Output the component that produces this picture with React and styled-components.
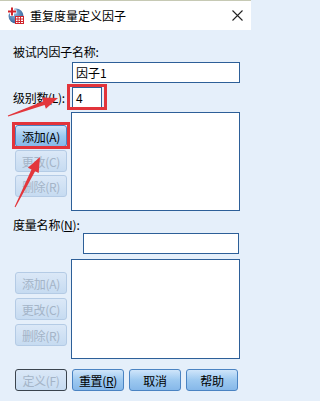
import React from 'react';
import styled, { createGlobalStyle } from 'styled-components';

const Global = createGlobalStyle`
  html, body { margin: 0; padding: 0; background: #e5effa; }
  body { font-family: "Noto Sans CJK SC", "Noto Sans", sans-serif; }
`;

const Window = styled.div`
  position: relative;
  width: 251px;
  height: 401px;
  background: #e5effa;
  display: flex;
  flex-direction: column;
  overflow: hidden;
  font-size: 12px;
  color: #000;
`;

const TitleBar = styled.div`
  height: 30px;
  flex: none;
  box-sizing: border-box;
  background: #fff;
  border-top: 1px solid #c6c9b4;
  display: flex;
  align-items: center;
  padding: 0 8px 0 7px;
  gap: 6px;
`;

const Title = styled.span`
  flex: 1;
  font-size: 12px;
  line-height: 16px;
  color: #000;
`;

const Body = styled.div`
  display: flex;
  flex-direction: column;
  padding: 0 11px 0 13px;
`;

const Label = styled.div`
  line-height: 16px;
  height: 16px;
  margin-top: ${p => p.$mt || 0}px;
  white-space: nowrap;
  letter-spacing: -0.2px;
`;

const TextBox = styled.div`
  box-sizing: border-box;
  height: 21px;
  width: ${p => p.$w}px;
  margin-top: ${p => p.$mt || 0}px;
  margin-left: ${p => p.$ml || 0}px;
  background: #fff;
  border: 1px solid #2d5f98;
  padding-left: 3px;
  line-height: 19px;
  font-size: 12px;
`;

const Row = styled.div`
  display: flex;
  align-items: center;
  margin-top: ${p => p.$mt || 0}px;
`;

const RowLabel = styled.div`
  width: 59px;
  line-height: 16px;
  white-space: nowrap;
  letter-spacing: -0.3px;
`;

const Highlight = styled.div`
  position: relative;
  &::after {
    content: '';
    position: absolute;
    left: -5px;
    right: -5px;
    top: -3px;
    bottom: -2px;
    border: 3px solid #e2343b;
    pointer-events: none;
  }
`;

const Section = styled.div`
  display: flex;
  margin-top: ${p => p.$mt || 0}px;
`;

const ButtonCol = styled.div`
  width: 52px;
  margin-left: 2px;
  margin-right: 4px;
  padding-top: 13px;
  display: flex;
  flex-direction: column;
  gap: ${p => p.$gap}px;
`;

const ListBox = styled.div`
  box-sizing: border-box;
  width: 170px;
  height: ${p => p.$h}px;
  background: #fff;
  border: 1px solid #2d5f98;
`;

const Btn = styled.div`
  position: relative;
  box-sizing: border-box;
  height: 22px;
  width: 52px;
  border-radius: 3px;
  display: flex;
  align-items: center;
  justify-content: center;
  font-size: 12px;
  white-space: nowrap;
  letter-spacing: -0.3px;
  ${p => p.$disabled ? `
    color: #a4b4c7;
    background: linear-gradient(#dbe8f7, #c6dbf1);
    border: 1px solid ${p.$focus ? '#3b444e' : '#b4cbe5'};
  ` : `
    color: #000;
    background: linear-gradient(#cfe5fa, #9dc9f0 50%, #86b8e9);
    border: 1px solid #4a83c2;
  `}
  ${p => p.$marked ? `
    &::after {
      content: '';
      position: absolute;
      left: -4px;
      right: -4px;
      top: -4px;
      bottom: -3px;
      border: 3px solid #e2343b;
      pointer-events: none;
    }
  ` : ''}
`;

const U = styled.span`
  text-decoration: underline;
  text-underline-offset: 1px;
`;

const BottomRow = styled.div`
  display: flex;
  gap: 5px;
  margin-top: 10px;
  margin-left: 2px;
`;

const Overlay = styled.svg`
  position: absolute;
  left: 0;
  top: 0;
  pointer-events: none;
`;

const AppIcon = () => (
  <svg width="17" height="17" viewBox="0 0 17 17">
    <defs>
      <radialGradient id="g" cx="0.4" cy="0.35" r="0.7">
        <stop offset="0" stopColor="#8fb8e0" />
        <stop offset="1" stopColor="#2f5f96" />
      </radialGradient>
    </defs>
    <circle cx="9" cy="9" r="7.5" fill="url(#g)" />
    <rect x="0.5" y="2.5" width="9" height="4" fill="#fff" />
    <rect x="3" y="0" width="4" height="9" fill="#fff" />
    <rect x="1" y="3.5" width="8" height="2" fill="#d0242c" />
    <rect x="4" y="0.5" width="2" height="8" fill="#d0242c" />
    <rect x="8.5" y="9.5" width="8" height="7" fill="#fff" stroke="#d0242c" strokeWidth="1" />
    <path d="M8.5 12h8M8.5 14.5h8M11 9.5v7M13.5 9.5v7" stroke="#d0242c" strokeWidth="1" />
  </svg>
);

const CloseIcon = () => (
  <svg width="11" height="11" viewBox="0 0 11 11">
    <path d="M0.5 0.5L10.5 10.5M10.5 0.5L0.5 10.5" stroke="#222" strokeWidth="1.1" />
  </svg>
);

export default function App() {
  return (
    <>
      <Global />
      <Window>
        <TitleBar>
          <AppIcon />
          <Title>重复度量定义因子</Title>
          <CloseIcon />
        </TitleBar>
        <Body>
          <Label $mt={14}>被试内因子名称:</Label>
          <TextBox $w={168} $ml={59} $mt={2}>因子1</TextBox>
          <Row $mt={4}>
            <RowLabel>级别数(L):</RowLabel>
            <Highlight>
              <TextBox $w={30}>4</TextBox>
            </Highlight>
          </Row>
          <Section $mt={4}>
            <ButtonCol $gap={3}>
              <Btn $marked>添加(A)</Btn>
              <Btn $disabled>更改(C)</Btn>
              <Btn $disabled>删除(R)</Btn>
            </ButtonCol>
            <ListBox $h={99} />
          </Section>
          <Label $mt={6}>度量名称(<U>N</U>):</Label>
          <TextBox $w={156} $ml={70} $mt={0}>{''}</TextBox>
          <Section $mt={5}>
            <ButtonCol $gap={4}>
              <Btn $disabled>添加(A)</Btn>
              <Btn $disabled>更改(C)</Btn>
              <Btn $disabled>删除(R)</Btn>
            </ButtonCol>
            <ListBox $h={100} />
          </Section>
          <BottomRow>
            <Btn $disabled $focus>定义(F)</Btn>
            <Btn>重置(<U>R</U>)</Btn>
            <Btn>取消</Btn>
            <Btn>帮助</Btn>
          </BottomRow>
        </Body>
        <Overlay width="251" height="401" viewBox="0 0 251 401">
          <polygon
            fill="#e3363c"
            points="8.2,116.5 44.6,105 45.9,108.8 58,98 41.9,97.5 43.2,101.2 7.8,115.5"
          />
          <polygon
            fill="#e3363c"
            points="15.5,207.2 35.1,171.3 38.7,173.1 40,157 27.9,167.7 31.5,169.5 14.6,206.8"
          />
        </Overlay>
      </Window>
    </>
  );
}
